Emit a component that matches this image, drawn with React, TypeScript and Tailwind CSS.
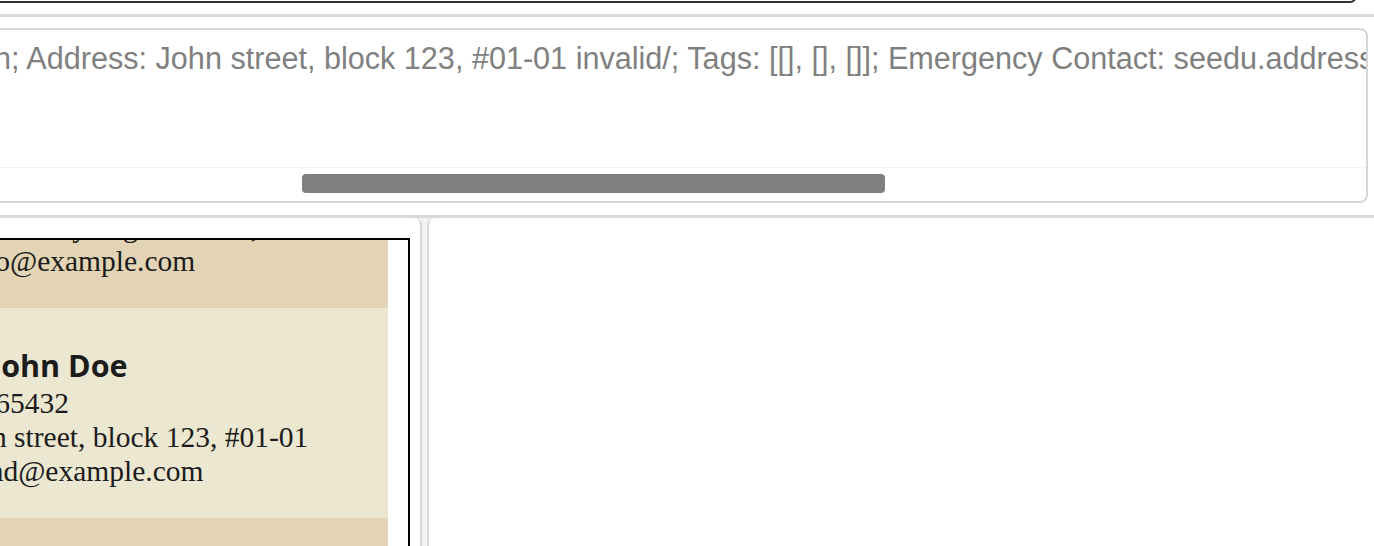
import React from 'react'

const serif = "font-['Liberation_Serif',serif]"

type Person = {
  id: number
  name: string
  phone: string
  address: string
  email: string
  tone: string
}

const people: Person[] = [
  {
    id: 1,
    name: 'Alex Yeoh',
    phone: '87438807',
    address: 'Blk 30 Geylang Street 29, #06-40',
    email: 'bobo@example.com',
    tone: 'bg-[#e2d4b4]',
  },
  {
    id: 2,
    name: 'John Doe',
    phone: '98765432',
    address: 'John street, block 123, #01-01',
    email: 'johnd@example.com',
    tone: 'bg-[#ece7d0]',
  },
  {
    id: 3,
    name: 'Bernice Yu',
    phone: '99272758',
    address: 'Blk 30 Lorong 3 Serangoon Gardens, #07-18',
    email: 'berniceyu@example.com',
    tone: 'bg-[#e2d4b4]',
  },
]

function PersonCard({ person }: { person: Person }) {
  return (
    <div className={`${person.tone} h-[210px] pl-[9px] pt-[41px] text-[#1c1c1c] whitespace-nowrap`}>
      <div className="ml-[6px] font-['Open_Sans',sans-serif] font-bold text-[30.5px] leading-[32px]">
        {person.id}. {person.name}
      </div>
      <div className={`${serif} text-[29.5px] leading-[34px] mt-[5px]`}>{person.phone}</div>
      <div className={`${serif} text-[29.5px] leading-[34px]`}>{person.address}</div>
      <div className={`${serif} text-[29.5px] leading-[34px]`}>{person.email}</div>
    </div>
  )
}

export default function App() {
  return (
    <div className="w-[1374px] h-[546px] overflow-hidden bg-white flex flex-col">
      <div className="shrink-0 h-[40px] mt-[-37px] -ml-[20px] mr-[17px] border-2 border-[#333333] rounded-[7px]" />

      <div className="shrink-0 h-[11px]" />
      <div className="shrink-0 h-[3px] bg-[#d9d9d9]" />
      <div className="shrink-0 h-[11px]" />

      {/* result display */}
      <div className="shrink-0 h-[175px] -ml-[20px] mr-[6px] border-2 border-[#d6d6d6] rounded-[8px] flex flex-col overflow-hidden">
        <div className="flex-1 pt-[10px] pl-[12px] whitespace-nowrap font-['Liberation_Sans',Arial,sans-serif] text-[30.6px] leading-[36px] text-[#808080]">
          n; Address: John street, block 123, #01-01 invalid/; Tags: [[], [], []]; Emergency Contact: seedu.address.model.person.EmergencyContact
        </div>
        <div className="h-[34px] border-t border-[#f3f3f3] pt-[6px] pl-[320px]">
          <div className="w-[583px] h-[19px] rounded-[4px] bg-[#808080]" />
        </div>
      </div>

      <div className="shrink-0 h-[12px]" />
      <div className="shrink-0 h-[3px] bg-[#d9d9d9]" />

      {/* lower split */}
      <div className="flex-1 flex bg-[#f3f3f3] min-h-0">
        <div className="-ml-[60px] w-[482px] shrink-0 bg-white rounded-tr-[7px] border-r-2 border-[#d8d8d8] pt-[20px] pr-[10px] overflow-hidden">
          <div className="h-[400px] border-2 border-black overflow-hidden">
            <div className="mt-[-142px] pr-[20px]">
              {people.map((p) => (
                <PersonCard key={p.id} person={p} />
              ))}
            </div>
          </div>
        </div>
        <div className="w-[5px] shrink-0" />
        <div className="flex-1 bg-white rounded-tl-[7px] border-l-2 border-[#d8d8d8]" />
      </div>
    </div>
  )
}
